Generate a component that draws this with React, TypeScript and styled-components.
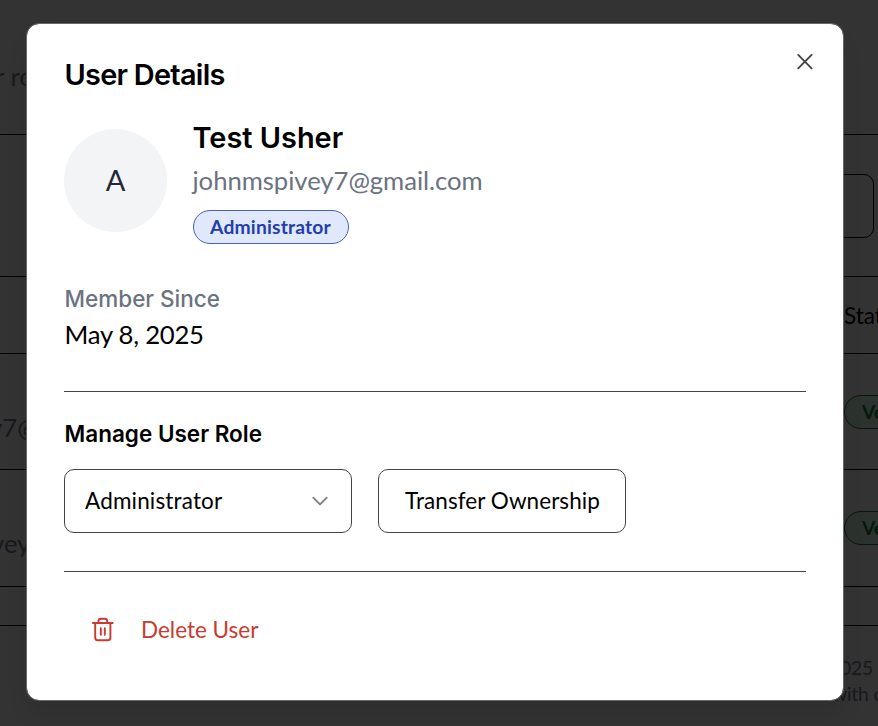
import React from "react";
import styled, { createGlobalStyle } from "styled-components";

const Global = createGlobalStyle`
  *, *::before, *::after { box-sizing: border-box; }
  body { margin: 0; background: #333; font-family: Lato, "Liberation Sans", sans-serif; }
  h2, h3, h4, p { margin: 0; }
  button { font: inherit; cursor: pointer; }
`;

const Screen = styled.div`
  position: relative;
  width: 878px;
  height: 726px;
  overflow: hidden;
  background: #333;
`;

const Backdrop = styled.div`
  display: flex;
  flex-direction: column;
  width: 878px;
`;

const Band = styled.div<{ $h: number }>`
  display: flex;
  align-items: center;
  justify-content: space-between;
  height: ${(p) => p.$h}px;
  border-bottom: 1px solid #000;
`;

const Faded = styled.span<{ $shift: number; $drop?: number }>`
  padding-top: ${(p) => p.$drop ?? 0}px;
  margin-left: ${(p) => p.$shift}px;
  font-size: 25.7px;
  color: #17191d;
  white-space: nowrap;
`;

const SearchBand = styled(Band)`
  justify-content: flex-end;
  padding-right: 4px;
`;

const SearchBox = styled.div`
  width: 400px;
  height: 64px;
  border: 1px solid #000;
  border-radius: 10px;
`;

const ColumnHeading = styled.span`
  width: 34px;
  margin-left: auto;
  font-size: 22.5px;
  color: #000;
  white-space: nowrap;
`;

const Verified = styled.span`
  flex: none;
  width: 120px;
  height: 34px;
  margin-right: -86px;
  padding-left: 17px;
  border: 1px solid #06170b;
  border-radius: 17px;
  background: #2c332e;
  color: #04190b;
  font-size: 19.3px;
  font-weight: 700;
  line-height: 32px;
`;

const Footer = styled.div`
  padding: 29px 0 0 843px;
  color: #17191d;
  font-size: 19.3px;
  line-height: 25.5px;
  white-space: nowrap;
`;

const FooterLine = styled.div<{ $shift: number }>`
  margin-left: ${(p) => p.$shift}px;
  letter-spacing: -0.2px;
`;

const Dialog = styled.section`
  position: absolute;
  left: 26px;
  top: 23px;
  width: 818px;
  height: 678px;
  padding: 33px 37px 0;
  border: 1px solid #686868;
  border-radius: 13px;
  background: #fff;
  background-clip: padding-box;
  box-shadow: 0 16px 24px -5px rgba(0, 0, 0, 0.12);
  color: #000;
`;

const CloseButton = styled.button`
  position: absolute;
  top: 25px;
  right: 25px;
  display: flex;
  padding: 0;
  border: 0;
  background: none;
`;

const Title = styled.h2`
  padding-left: 0.5px;
  font: 600 28.9px/36px Inter, sans-serif;
  letter-spacing: -0.72px;
`;

const Profile = styled.div`
  display: flex;
  align-items: flex-start;
  gap: 26px;
  margin-top: 25px;
`;

const Avatar = styled.div`
  display: flex;
  align-items: center;
  justify-content: center;
  flex: none;
  width: 103px;
  height: 103px;
  margin-top: 11px;
  padding-bottom: 2px;
  border-radius: 50%;
  background: #f3f4f6;
  color: #1f2937;
  font-size: 29px;
`;

const Identity = styled.div`
  display: flex;
  flex-direction: column;
  align-items: flex-start;
  margin-left: -0.5px;
`;

const Name = styled.h3`
  font: 600 28.9px/40px Inter, sans-serif;
`;

const Email = styled.p`
  margin-top: 3px;
  color: #6b7280;
  font-size: 25.7px;
  letter-spacing: -0.05px;
  line-height: 39px;
`;

const RoleBadge = styled.span`
  width: 156px;
  height: 34px;
  margin-top: 10px;
  border: 1px solid #4962bd;
  border-radius: 17px;
  background: #dfe9fb;
  color: #253eaa;
  font-size: 19.3px;
  font-weight: 700;
  letter-spacing: 0.16px;
  line-height: 32px;
  text-align: center;
`;

const FieldLabel = styled.h4`
  margin-top: 39px;
  padding-left: 0.5px;
  color: #6b7280;
  font: 500 22.5px/32px Inter, sans-serif;
`;

const FieldValue = styled.p`
  padding-left: 0.5px;
  font-size: 25.7px;
  letter-spacing: -0.25px;
  line-height: 39px;
`;

const Divider = styled.hr<{ $gap: number }>`
  height: 1px;
  margin: ${(p) => p.$gap}px 0 0;
  border: 0;
  background: #444;
`;

const SectionTitle = styled.h4`
  margin-top: 26px;
  padding-left: 0.5px;
  font: 600 22.5px/32px Inter, sans-serif;
`;

const Controls = styled.div`
  display: flex;
  gap: 26px;
  margin-top: 19px;
`;

const Control = styled.button<{ $w: number; $select?: boolean }>`
  display: flex;
  align-items: center;
  justify-content: ${(p) => (p.$select ? "space-between" : "center")};
  width: ${(p) => p.$w}px;
  height: 64px;
  padding: ${(p) => (p.$select ? "0 19px 1px 20px" : "0 0 1px 1px")};
  border: 1px solid #444;
  border-radius: 10px;
  background: #fff;
  color: #000;
  font-size: 22.5px;
  letter-spacing: ${(p) => (p.$select ? 0.16 : 0.06)}px;
`;

const DeleteButton = styled.button`
  display: flex;
  align-items: center;
  gap: 26px;
  height: 64px;
  margin-top: 25px;
  padding: 0 27px;
  border: 0;
  background: none;
  color: #c93a30;
  font-size: 22.5px;
`;

const CloseIcon = () => (
  <svg width="26" height="26" viewBox="0 0 26 26" fill="none" stroke="#444" strokeWidth="1.9" strokeLinecap="round">
    <path d="M6.2 5.9 19.6 19.3M19.6 5.9 6.2 19.3" />
  </svg>
);

const ChevronIcon = () => (
  <svg width="24" height="24" viewBox="0 0 24 24" fill="none" stroke="#808080" strokeWidth="1.9" strokeLinecap="round" strokeLinejoin="round">
    <path d="m5.3 8.7 6.7 6.7 6.7-6.7" />
  </svg>
);

const TrashIcon = () => (
  <svg width="24" height="26" viewBox="0 0 24 26" fill="none" stroke="currentColor" strokeWidth="1.9" strokeLinecap="round" strokeLinejoin="round">
    <path d="M1.9 7h19.8M4.2 7v14.8c0 1.5.9 2.4 2.4 2.4H17c1.5 0 2.4-.9 2.4-2.4V7M7.4 6.7V5.2c0-1.5 1-2.4 2.5-2.4h3.8c1.5 0 2.5.9 2.5 2.4v1.5M9.8 12.2v6.6M13.8 12.2v6.6" />
  </svg>
);

export default function App() {
  return (
    <Screen>
      <Global />
      <Backdrop aria-hidden="true">
        <Band $h={135}>
          <Faded $shift={-5} $drop={18}>r ro</Faded>
        </Band>
        <SearchBand $h={142}>
          <SearchBox />
        </SearchBand>
        <Band $h={77}>
          <ColumnHeading>Status</ColumnHeading>
        </Band>
        <Band $h={116}>
          <Faded $shift={-11} $drop={30}>y7@</Faded>
          <Verified>Verified</Verified>
        </Band>
        <Band $h={117}>
          <Faded $shift={-9} $drop={30}>vey</Faded>
          <Verified>Verified</Verified>
        </Band>
        <Band $h={39} />
        <Footer>
          <FooterLine $shift={-3}>025</FooterLine>
          <FooterLine $shift={-11}>with c</FooterLine>
        </Footer>
      </Backdrop>
      <Dialog role="dialog" aria-labelledby="dialog-title">
        <Title id="dialog-title">User Details</Title>
        <CloseButton aria-label="Close">
          <CloseIcon />
        </CloseButton>
        <Profile>
          <Avatar>A</Avatar>
          <Identity>
            <Name>Test Usher</Name>
            <Email>johnmspivey7@gmail.com</Email>
            <RoleBadge>Administrator</RoleBadge>
          </Identity>
        </Profile>
        <FieldLabel>Member Since</FieldLabel>
        <FieldValue>May 8, 2025</FieldValue>
        <Divider $gap={37} />
        <SectionTitle>Manage User Role</SectionTitle>
        <Controls>
          <Control $w={288} $select aria-haspopup="listbox">
            Administrator
            <ChevronIcon />
          </Control>
          <Control $w={248}>Transfer Ownership</Control>
        </Controls>
        <Divider $gap={38} />
        <DeleteButton>
          <TrashIcon />
          Delete User
        </DeleteButton>
      </Dialog>
    </Screen>
  );
}
